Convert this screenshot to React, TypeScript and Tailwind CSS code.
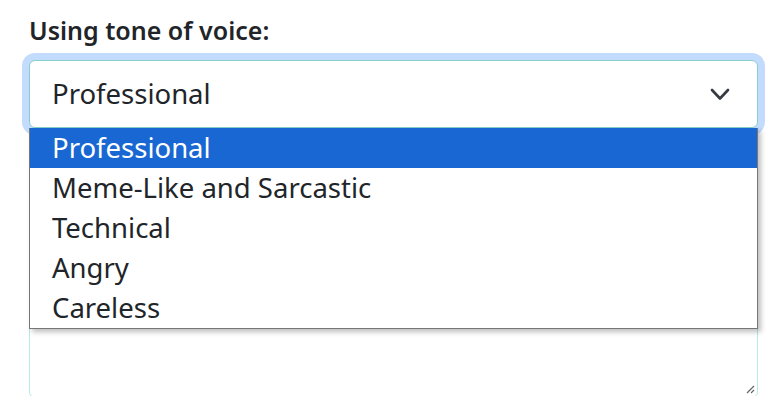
const tones = ["Professional", "Meme-Like and Sarcastic", "Technical", "Angry", "Careless"];

export default function App() {
  const selected = "Professional";

  return (
    <div
      className="h-[396px] w-[782px] overflow-hidden bg-white pl-[29px] pr-[24px] pt-[13px] text-[#212529]"
      style={{ fontFamily: '"Noto Sans", "Open Sans", sans-serif' }}
    >
      <label className="block text-[25px] font-semibold leading-[34px]">Using tone of voice:</label>

      <div className="relative mt-[13px]">
        {/* select */}
        <div className="flex h-[68px] items-center justify-between rounded-[6px] border border-[#86d0cc] bg-white pl-[22px] pr-[27px] shadow-[0_0_0_7px_#c3dbfd]">
          <span className="text-[27.5px]">{selected}</span>
          <svg className="h-[13px] w-[20px]" viewBox="0 0 20 13" fill="none">
            <path d="M2 2 L10 10.5 L18 2" stroke="#343a40" strokeWidth="2.6" strokeLinecap="round" strokeLinejoin="round" />
          </svg>
        </div>

        {/* textarea underneath */}
        <div className="relative mt-[14px] h-[256px] rounded-[6px] border border-[#b8eaea] bg-white">
          <svg className="absolute bottom-[3px] right-[2px] h-[9px] w-[9px]" viewBox="0 0 9 9">
            <path d="M8 1 L1 8 M8 5 L5 8" stroke="#666" strokeWidth="1.2" />
          </svg>
        </div>

        {/* open options list */}
        <ul className="absolute left-0 top-[68px] w-[729px] border border-[#767676] border-t-0 bg-white shadow-[3px_3px_5px_rgba(0,0,0,0.25)]">
          {tones.map((t) => (
            <li
              key={t}
              className={`flex h-[40px] items-center pl-[22px] text-[27.5px] ${
                t === selected ? "bg-[#1967d2] text-white" : "text-[#212529]"
              }`}
            >
              {t}
            </li>
          ))}
        </ul>
      </div>
    </div>
  );
}
